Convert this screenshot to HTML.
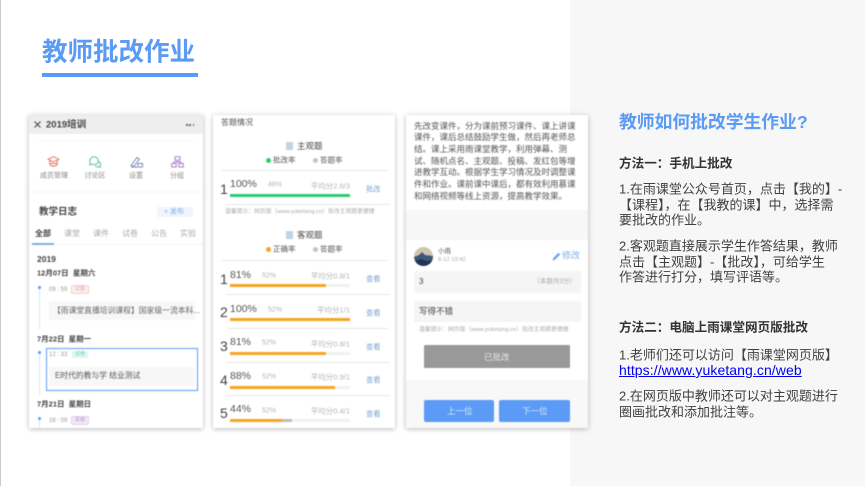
<!DOCTYPE html>
<html lang="zh-CN">
<head>
<meta charset="utf-8">
<title>教师批改作业</title>
<style>
html,body{margin:0;padding:0;width:865px;height:486px;overflow:hidden;background:#fff}
body{position:relative;font-family:"Liberation Sans","Noto Sans CJK SC",sans-serif;color:#444}
div,span,a,svg{position:absolute}
.t{white-space:nowrap;line-height:1;transform:translateY(-50%)}
.b{font-weight:700}
.r{background:#fff}
#layer{left:0;top:0;width:865px;height:486px;filter:blur(.4px)}
.card{background:#fff;box-shadow:0 1px 5px rgba(0,0,0,.28);top:115px;height:313px}
.g{color:#aaa}
.m{font-size:7px;color:#b5b5b5}
.blue{color:#7aa6d0}
.hr{height:1px;background:#e6e6e6}
.tag{height:7px;width:16px;font-size:5px;line-height:7px;text-align:center;border-radius:1px}
.track{left:230px;width:120px;height:3px;background:#f1f1f1}
.track div{left:0;top:0;height:3px;background:#f5a623}
.rn{left:220px;font-size:14px;color:#444}
.rp{left:230px;font-size:10.5px;color:#555}
.ra{font-size:7.5px;color:#b5b5b5;right:515px}
.rl{left:366px;font-size:7.3px;color:#7aa6d0}
.line{left:619px;font-size:13px;color:#404040}
.hd{left:619px;font-size:12.6px;font-weight:700;color:#333}
.tab{font-size:8px;color:#aaa}
.lab{font-size:7px;color:#888;transform:translate(-50%,-50%)}
.date{left:37px;font-size:7.5px;font-weight:700;color:#444}
.box{left:49px;width:146px;height:19px;background:#f7f7f7}
.dot{width:5px;height:5px;border-radius:50%}
</style>
</head>
<body>
<div style="left:0;top:0;width:1px;height:486px;background:#ccc"></div>
<div style="left:570px;top:0;width:295px;height:486px;background:#f7f7f7"></div>

<span class="t b" style="left:42px;top:52.5px;font-size:25.5px;color:#5b9bf5">教师批改作业</span>
<div style="left:42px;top:73px;width:156px;height:4px;background:#5b9bf5"></div>

<div id="layer">
  <!-- card 1 -->
  <div class="card" style="left:29px;width:174px"></div>
  <div style="left:29px;top:115px;width:174px;height:19px;background:#eeeeee"></div>
  <svg style="left:34px;top:121px" width="7" height="7" viewBox="0 0 7 7"><path d="M.5.5l6 6M6.5.5l-6 6" stroke="#444" stroke-width="1"/></svg>
  <span class="t b" style="left:46px;top:124.500px;font-size:9.5px;color:#444">2019培训</span>
  <div style="left:186px;top:124px;width:1.500px;height:1.500px;background:#666"></div>
  <div style="left:189.300px;top:124px;width:1.500px;height:1.500px;background:#666"></div>
  <div style="left:192.600px;top:124px;width:1.500px;height:1.500px;background:#666"></div>
  <div style="left:39px;top:140px;width:155px;height:1px;background:#f5f5f5"></div>

  <svg style="left:47px;top:156px" width="13" height="12" viewBox="0 0 13 12" fill="none" stroke="#e8786f" stroke-width="1"><path d="M6.500 .7L12 3.300 6.500 5.800 1 3.300z"/><path d="M2.800 4.500v4.200q3.700 3 7.400 0V4.500"/><path d="M3 7.500h7"/></svg>
  <svg style="left:88px;top:156px" width="14" height="12" viewBox="0 0 14 12" fill="none" stroke="#5cc29a" stroke-width="1"><path d="M5.500 .7a4.700 4.300 0 0 1 4.300 6.300 4.700 4.300 0 0 1-5.700 1.100L1.800 9l.4-2.300A4.500 4.300 0 0 1 5.500 .7z"/><path d="M10 5.500a2.600 2.600 0 0 1 2 4.200l.3 1.600-1.700-.7a2.800 2.800 0 0 1-3.500-1"/></svg>
  <svg style="left:130px;top:156px" width="13" height="12" viewBox="0 0 13 12" fill="none" stroke="#7c8db5" stroke-width="1"><path d="M1 9.500L7 1.500l2.300 1.700-5.500 7.300z"/><path d="M1 11h11.500M8 10V7.500h4.500V11"/></svg>
  <svg style="left:171px;top:156px" width="13" height="12" viewBox="0 0 13 12" fill="none" stroke="#b07fcf" stroke-width="1"><rect x="4" y=".7" width="5" height="3.500"/><rect x=".7" y="7.500" width="4.500" height="3.500"/><rect x="7.800" y="7.500" width="4.500" height="3.500"/><path d="M6.500 4.200V6H3v1.500M6.500 6H10v1.500"/></svg>
  <span class="t lab" style="left:54px;top:176px">成员管理</span>
  <span class="t lab" style="left:95px;top:176px">讨论区</span>
  <span class="t lab" style="left:136px;top:176px">设置</span>
  <span class="t lab" style="left:177px;top:176px">分组</span>
  <div style="left:29px;top:191px;width:174px;height:2px;background:#fafafa"></div>

  <span class="t b" style="left:39px;top:212px;font-size:9.500px;color:#444">教学日志</span>
  <div style="left:157px;top:207px;width:36px;height:10px;background:#eef5fd;border-radius:2px"></div>
  <span class="t" style="left:164px;top:212px;font-size:7px;color:#7fb0e8">+ 发布</span>

  <span class="t b tab" style="left:35px;top:233.500px;color:#444">全部</span>
  <span class="t tab" style="left:64px;top:234px">课堂</span>
  <span class="t tab" style="left:93px;top:234px">课件</span>
  <span class="t tab" style="left:122px;top:234px">试卷</span>
  <span class="t tab" style="left:151px;top:234px">公告</span>
  <span class="t tab" style="left:180px;top:234px">实验</span>
  <div style="left:29px;top:244px;width:174px;height:1px;background:#f3f3f3"></div>
  <div style="left:32px;top:243px;width:22px;height:1.500px;background:#7fb0e8"></div>

  <span class="t b" style="left:37px;top:259px;font-size:8.500px;color:#444">2019</span>
  <span class="t date" style="top:273px">12月07日&nbsp;&nbsp;星期六</span>
  <div style="left:39px;top:287px;width:1px;height:42px;background:#d9e6f2"></div>
  <div style="left:38px;top:285.500px;width:3px;height:3px;border-radius:50%;background:#5b9bf5"></div>
  <span class="t" style="left:49px;top:290px;font-size:6px;color:#999">09 : 59</span>
  <div class="tag" style="left:72px;top:286px;background:#fbeeee;color:#d79a92;outline:.5px solid #eed2ce">公告</div>
  <div class="box" style="top:301px"></div>
  <span class="t" style="left:53px;top:310.500px;font-size:7.800px;color:#666">【雨课堂直播培训课程】国家级一流本科...</span>

  <span class="t date" style="top:339px">7月22日&nbsp;&nbsp;星期一</span>
  <div style="left:39px;top:351px;width:1px;height:44px;background:#d9e6f2"></div>
  <div style="left:38px;top:351px;width:3px;height:3px;border-radius:50%;background:#5b9bf5"></div>
  <span class="t" style="left:49px;top:355px;font-size:6px;color:#999">12 : 33</span>
  <div class="tag" style="left:72px;top:351px;background:#dff5f3;color:#7fd0c8">试卷</div>
  <div class="box" style="top:367px"></div>
  <span class="t" style="left:55px;top:376px;font-size:7.800px;color:#555">E时代的教与学 结业测试</span>
  <div style="left:46px;top:348px;width:150px;height:41px;border:1.500px solid #5b9bf5"></div>

  <span class="t date" style="top:404px">7月21日&nbsp;&nbsp;星期日</span>
  <div style="left:39px;top:418px;width:1px;height:10px;background:#d9e6f2"></div>
  <div style="left:38px;top:416.500px;width:3px;height:3px;border-radius:50%;background:#5b9bf5"></div>
  <span class="t" style="left:49px;top:421px;font-size:6px;color:#999">16 : 09</span>
  <div class="tag" style="left:72px;top:417px;background:#f1e8f7;color:#b08cc8;outline:.5px solid #e2d3ee">实验</div>

  <!-- card 2 -->
  <div class="card" style="left:213px;width:182px"></div>
  <span class="t" style="left:221px;top:123px;font-size:8px;color:#555">答题情况</span>
  <div style="left:286px;top:142px;width:7px;height:8px;background:#bcd4e6"></div>
  <span class="t" style="left:297px;top:146px;font-size:8.500px;color:#444">主观题</span>
  <div class="dot" style="left:266px;top:158px;background:#2ecc71"></div>
  <span class="t" style="left:273px;top:160px;font-size:7.500px;color:#555">批改率</span>
  <div class="dot" style="left:313px;top:158px;background:#c4c4c4"></div>
  <span class="t" style="left:320px;top:160px;font-size:7.500px;color:#555">答题率</span>
  <div class="hr" style="left:221px;top:170px;width:167px"></div>

  <span class="t rn" style="top:189px">1</span>
  <span class="t rp" style="top:184px">100%</span>
  <span class="t m" style="left:268px;top:185px">48%</span>
  <span class="t ra" style="top:186px">平均分2.6/3</span>
  <span class="t rl" style="top:189px">批改</span>
  <div class="track" style="top:194px"><div style="width:120px;background:#2ecc71"></div></div>
  <div class="hr" style="left:227px;top:204px;width:162px"></div>
  <span class="t" style="left:225px;top:213px;font-size:5.800px;color:#aaa">温馨提示：网页版（www.yuketang.cn）批改主观题更便捷</span>

  <div style="left:286px;top:231px;width:7px;height:8px;background:#bcd4e6"></div>
  <span class="t" style="left:297px;top:235px;font-size:8.500px;color:#444">客观题</span>
  <div class="dot" style="left:266px;top:247px;background:#f5a623"></div>
  <span class="t" style="left:273px;top:249px;font-size:7.500px;color:#555">正确率</span>
  <div class="dot" style="left:313px;top:247px;background:#c4c4c4"></div>
  <span class="t" style="left:320px;top:249px;font-size:7.500px;color:#555">答题率</span>
  <div class="hr" style="left:221px;top:260px;width:167px"></div>

  <span class="t rn" style="top:278.500px">1</span>
  <span class="t rp" style="top:275px">81%</span>
  <span class="t m" style="left:262px;top:276px">52%</span>
  <span class="t ra" style="top:276px">平均分0.8/1</span>
  <span class="t rl" style="top:279px">查看</span>
  <div class="track" style="top:284px"><div style="width:96px"></div></div>
  <div class="hr" style="left:227px;top:294px;width:162px"></div>

  <span class="t rn" style="top:312px">2</span>
  <span class="t rp" style="top:308.500px">100%</span>
  <span class="t m" style="left:268px;top:309.500px">52%</span>
  <span class="t ra" style="top:310px">平均分1/1</span>
  <span class="t rl" style="top:313px">查看</span>
  <div class="track" style="top:318px"><div style="width:120px"></div></div>
  <div class="hr" style="left:227px;top:328px;width:162px"></div>

  <span class="t rn" style="top:346px">3</span>
  <span class="t rp" style="top:342px">81%</span>
  <span class="t m" style="left:262px;top:343px">52%</span>
  <span class="t ra" style="top:343.500px">平均分0.8/1</span>
  <span class="t rl" style="top:346.500px">查看</span>
  <div class="track" style="top:352px"><div style="width:96px"></div></div>
  <div class="hr" style="left:227px;top:361.500px;width:162px"></div>

  <span class="t rn" style="top:379.500px">4</span>
  <span class="t rp" style="top:375.500px">88%</span>
  <span class="t m" style="left:262px;top:377px">52%</span>
  <span class="t ra" style="top:377px">平均分0.9/1</span>
  <span class="t rl" style="top:380px">查看</span>
  <div class="track" style="top:385.500px"><div style="width:105px"></div></div>
  <div class="hr" style="left:227px;top:395px;width:162px"></div>

  <span class="t rn" style="top:413px">5</span>
  <span class="t rp" style="top:409px">44%</span>
  <span class="t m" style="left:262px;top:410.500px">52%</span>
  <span class="t ra" style="top:411px">平均分0.4/1</span>
  <span class="t rl" style="top:414px">查看</span>
  <div class="track" style="top:419px"><div style="width:62px;background:#bdbdbd"></div><div style="width:52px"></div></div>

  <!-- card 3 -->
  <div class="card" style="left:406px;width:182px"></div>
  <span class="t" style="left:414px;top:125.700px;font-size:8.500px;color:#555">先改变课件，分为课前预习课件、课上讲课</span>
  <span class="t" style="left:414px;top:137.300px;font-size:8.500px;color:#555">课件，课后总结鼓励学生做，然后再老师总</span>
  <span class="t" style="left:414px;top:149px;font-size:8.500px;color:#555">结。课上采用雨课堂教学，利用弹幕、测</span>
  <span class="t" style="left:414px;top:160.700px;font-size:8.500px;color:#555">试、随机点名、主观题、投稿、发红包等增</span>
  <span class="t" style="left:414px;top:172.300px;font-size:8.500px;color:#555">进教学互动。根据学生学习情况及时调整课</span>
  <span class="t" style="left:414px;top:184px;font-size:8.500px;color:#555">件和作业。课前课中课后，都有效利用慕课</span>
  <span class="t" style="left:414px;top:195.700px;font-size:8.500px;color:#555">和网络视频等线上资源，提高教学效果。</span>
  <div style="left:406px;top:210px;width:182px;height:30px;background:#f7f7f7"></div>

  <svg style="left:414px;top:247px" width="19" height="19" viewBox="0 0 19 19"><defs><clipPath id="av"><circle cx="9.500" cy="9.500" r="9.500"/></clipPath></defs><g clip-path="url(#av)"><rect width="19" height="19" fill="#cfc6b2"/><path d="M0 10l5-2 3-3 3 3 8 1v10H0z" fill="#3b5a78"/><path d="M0 14l7-2 6 2 6-1v6H0z" fill="#1f3550"/></g></svg>
  <span class="t" style="left:438px;top:252px;font-size:6.500px;color:#555">小雨</span>
  <span class="t" style="left:438px;top:261px;font-size:5.800px;color:#aaa">8-12 13:42</span>
  <svg style="left:552px;top:252px" width="9" height="9" viewBox="0 0 9 9"><path d="M.5 8.500l.8-2.500L6.500.8l1.700 1.700L3 7.700z" fill="#6ea5ec"/></svg>
  <span class="t" style="left:562px;top:256px;font-size:9px;color:#7fb0e8">修改</span>

  <div style="left:414px;top:271px;width:167px;height:22px;background:#f5f5f5;border-radius:1px"></div>
  <span class="t" style="left:419px;top:282px;font-size:8px;color:#444">3</span>
  <span class="t" style="right:289px;top:282px;font-size:6.500px;color:#aaa">（本题共3分）</span>
  <div style="left:414px;top:301px;width:167px;height:21px;background:#f5f5f5;border-radius:1px"></div>
  <span class="t" style="left:419px;top:311px;font-size:8.500px;color:#444">写得不错</span>
  <span class="t" style="left:419px;top:331px;font-size:5.800px;color:#aaa">温馨提示：网页版（www.yuketang.cn）批改主观题更便捷</span>
  <div style="left:424px;top:345px;width:146px;height:23px;background:#999;border-radius:1px"></div>
  <span class="t" style="left:484px;top:356.500px;font-size:8.500px;color:#e6e6e6">已批改</span>
  <div style="left:406px;top:380px;width:182px;height:48px;background:#f8f8f8"></div>
  <div style="left:424px;top:400px;width:70px;height:22px;background:#5b9bf5;border-radius:2px"></div>
  <span class="t" style="left:447px;top:411px;font-size:8.500px;color:#dbe9fc">上一位</span>
  <div style="left:499px;top:400px;width:71px;height:22px;background:#5b9bf5;border-radius:2px"></div>
  <span class="t" style="left:522px;top:411px;font-size:8.500px;color:#dbe9fc">下一位</span>
</div>

<!-- right panel -->
<span class="t b" style="left:619px;top:123px;font-size:17.8px;color:#5b9bf5">教师如何批改学生作业?</span>
<span class="t hd" style="top:164px">方法一：手机上批改</span>
<span class="t line" style="top:189px">1.在雨课堂公众号首页，点击【我的】-</span>
<span class="t line" style="top:205px">【课程】，在【我教的课】中，选择需</span>
<span class="t line" style="top:220px">要批改的作业。</span>
<span class="t line" style="top:246px">2.客观题直接展示学生作答结果，教师</span>
<span class="t line" style="top:262px">点击【主观题】-【批改】，可给学生</span>
<span class="t line" style="top:277px">作答进行打分，填写评语等。</span>
<span class="t hd" style="top:328px">方法二：电脑上雨课堂网页版批改</span>
<span class="t line" style="top:355px">1.老师们还可以访问【雨课堂网页版】</span>
<a class="t line" style="top:370px;color:#0000ee;text-decoration:underline;font-size:14px;letter-spacing:.08px">https://www.yuketang.cn/web</a>
<span class="t line" style="top:396px">2.在网页版中教师还可以对主观题进行</span>
<span class="t line" style="top:412px">圈画批改和添加批注等。</span>
</body>
</html>
